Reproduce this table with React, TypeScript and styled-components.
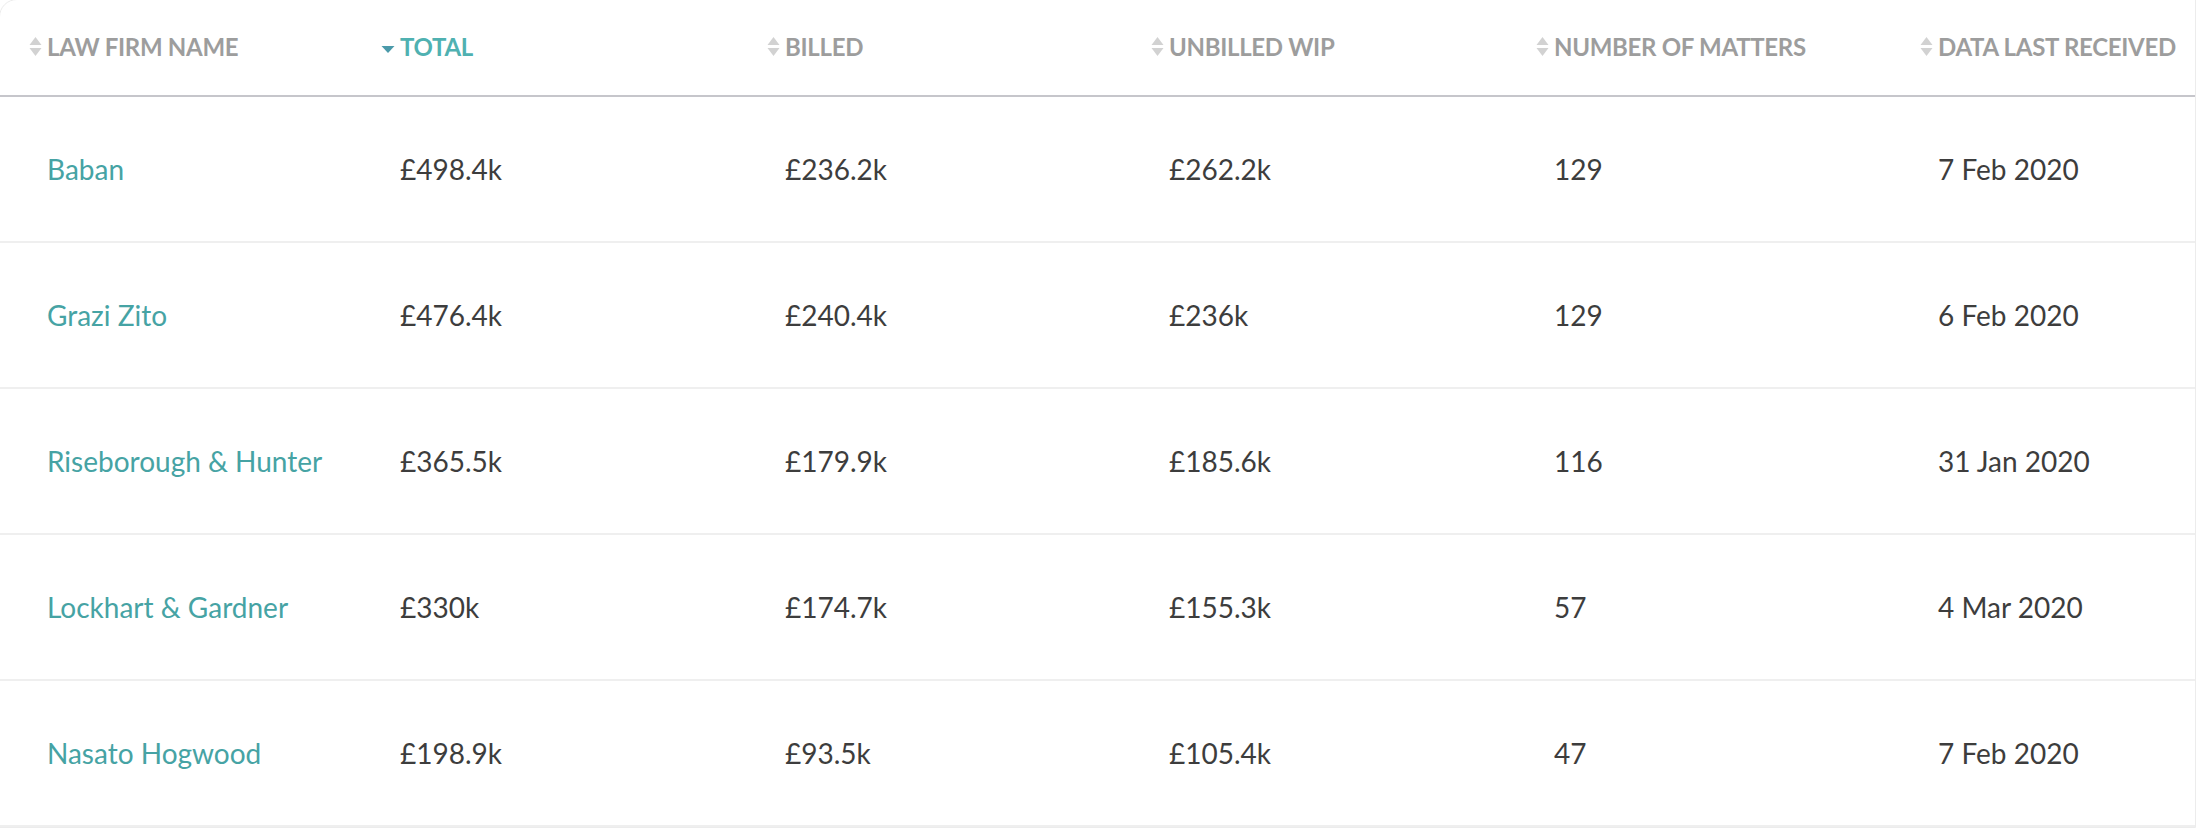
import React from "react";
import styled, { createGlobalStyle } from "styled-components";

const Global = createGlobalStyle`
  html, body { margin: 0; padding: 0; background: #ffffff; }
  body { font-family: "Lato", "Open Sans", sans-serif; -webkit-font-smoothing: antialiased; }
`;

const COLS = "353px 385px 384px 385px 384px 1fr";

const Card = styled.div`
  margin: -1px 0 0 -1px;
  border: 1px solid #ececec;
  border-top-left-radius: 18px;
  background: #fff;
  overflow: hidden;
`;

const HeaderRow = styled.div`
  display: grid;
  grid-template-columns: ${COLS};
  height: 95px;
  border-bottom: 2px solid #c6c6cb;
  align-items: center;
`;

const HeadCell = styled.div<{ $active?: boolean }>`
  display: flex;
  align-items: center;
  gap: 5px;
  padding-left: 28px;
  font-family: "Lato", sans-serif;
  font-weight: 700;
  font-size: 24px;
  letter-spacing: -0.3px;
  text-transform: uppercase;
  color: ${(p) => (p.$active ? "#4fb1b1" : "#9d9d9d")};
  white-space: nowrap;
  margin-top: -2px;
`;

const IconBox = styled.span`
  display: inline-flex;
  width: 14px;
  justify-content: center;
  flex: none;
`;

const Row = styled.div`
  display: grid;
  grid-template-columns: ${COLS};
  height: 144px;
  border-bottom: 2px solid #efefef;
  align-items: center;
`;

const Cell = styled.div`
  padding-left: 47px;
  font-family: "Lato", sans-serif;
  font-size: 28px;
  color: #3d3d3d;
  white-space: nowrap;
`;

const FirmLink = styled.a`
  color: #46a3a4;
  text-decoration: none;
  cursor: pointer;
`;

const SortBoth = () => (
  <IconBox>
    <svg width="13" height="21" viewBox="0 0 13 21">
      <path d="M6.5 1 L12.5 9 L0.5 9 Z" fill="#d2d2d2" />
      <path d="M6.5 20 L12.5 12 L0.5 12 Z" fill="#d2d2d2" />
    </svg>
  </IconBox>
);

const SortDown = () => (
  <IconBox>
    <svg width="14" height="21" viewBox="0 0 14 21">
      <path d="M7 17 L13.5 10 L0.5 10 Z" fill="#4b9aaa" />
    </svg>
  </IconBox>
);

const columns = [
  { label: "Law Firm Name", active: false },
  { label: "Total", active: true },
  { label: "Billed", active: false },
  { label: "Unbilled WIP", active: false },
  { label: "Number of Matters", active: false },
  { label: "Data Last Received", active: false },
];

const rows = [
  ["Baban", "£498.4k", "£236.2k", "£262.2k", "129", "7 Feb 2020"],
  ["Grazi Zito", "£476.4k", "£240.4k", "£236k", "129", "6 Feb 2020"],
  ["Riseborough & Hunter", "£365.5k", "£179.9k", "£185.6k", "116", "31 Jan 2020"],
  ["Lockhart & Gardner", "£330k", "£174.7k", "£155.3k", "57", "4 Mar 2020"],
  ["Nasato Hogwood", "£198.9k", "£93.5k", "£105.4k", "47", "7 Feb 2020"],
];

export default function App() {
  return (
    <>
      <Global />
      <Card>
        <HeaderRow>
          {columns.map((c) => (
            <HeadCell key={c.label} $active={c.active}>
              {c.active ? <SortDown /> : <SortBoth />}
              <span>{c.label}</span>
            </HeadCell>
          ))}
        </HeaderRow>
        {rows.map((r) => (
          <Row key={r[0]}>
            <Cell>
              <FirmLink>{r[0]}</FirmLink>
            </Cell>
            {r.slice(1).map((v, i) => (
              <Cell key={i}>{v}</Cell>
            ))}
          </Row>
        ))}
      </Card>
    </>
  );
}
